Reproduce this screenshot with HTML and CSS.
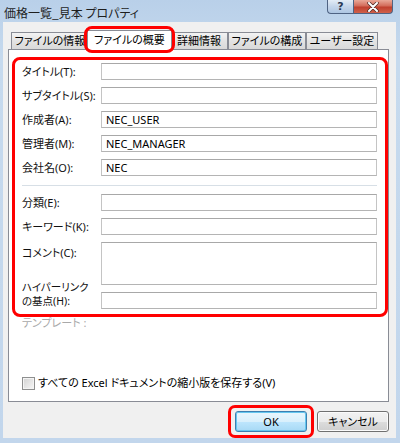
FILE: index.html
```html
<!DOCTYPE html>
<html lang="ja">

<head>
    <meta charset="UTF-8">
    <title>価格一覧_見本 プロパティ</title>
    <link rel="stylesheet" href="styles.css">
</head>

<body>
    <div class="window">
        <div class="titlebar">
            <span class="caption">価格一覧_見本 プロパティ</span>
            <div class="caption-btns">
                <span class="cap-btn cap-help">?</span>
                <span class="cap-btn cap-close">
                    <svg width="14" height="10" viewBox="0 0 14 10">
                        <path d="M3 1 L11 9 M11 1 L3 9" stroke="#4a2a26" stroke-width="3.4" stroke-linecap="round" />
                        <path d="M3 1 L11 9 M11 1 L3 9" stroke="#fff" stroke-width="2" stroke-linecap="round" />
                    </svg>
                </span>
            </div>
        </div>

        <div class="dialog">
            <ul class="tabs">
                <li class="tab tab-1">ファイルの情報</li>
                <li class="tab tab-2 active">ファイルの概要</li>
                <li class="tab tab-3">詳細情報</li>
                <li class="tab tab-4">ファイルの構成</li>
                <li class="tab tab-5">ユーザー設定</li>
            </ul>

            <div class="panel">
                <div class="form mark">
                    <div class="row">
                        <label class="lbl">タイトル(T):</label>
                        <div class="field"></div>
                    </div>
                    <div class="row">
                        <label class="lbl">サブタイトル(S):</label>
                        <div class="field"></div>
                    </div>
                    <div class="row">
                        <label class="lbl">作成者(A):</label>
                        <div class="field">NEC_USER</div>
                    </div>
                    <div class="row">
                        <label class="lbl">管理者(M):</label>
                        <div class="field">NEC_MANAGER</div>
                    </div>
                    <div class="row">
                        <label class="lbl">会社名(O):</label>
                        <div class="field">NEC</div>
                    </div>

                    <div class="sep"></div>

                    <div class="row">
                        <label class="lbl">分類(E):</label>
                        <div class="field"></div>
                    </div>
                    <div class="row">
                        <label class="lbl">キーワード(K):</label>
                        <div class="field"></div>
                    </div>
                    <div class="row row-top">
                        <label class="lbl">コメント(C):</label>
                        <div class="field field-big"></div>
                    </div>
                    <div class="row">
                        <label class="lbl lbl-2">ハイパーリンク<br>の基点(H):</label>
                        <div class="field"></div>
                    </div>
                </div>

                <div class="template">テンプレート :</div>

                <div class="check">
                    <span class="box"></span>
                    <span>すべての Excel ドキュメントの縮小版を保存する(V)</span>
                </div>
            </div>

            <div class="buttons">
                <span class="mark-btn"><button class="btn btn-default">OK</button></span>
                <button class="btn">キャンセル</button>
            </div>
        </div>
    </div>
</body>

</html>
```

FILE: styles.css
```css
* {
    padding: 0;
    margin: 0;
    list-style: none;
    box-sizing: border-box;
}

body {
    background: #c4d8ed;
    font-family: "Noto Sans", "Noto Sans CJK JP", sans-serif;
    font-size: 11px;
    line-height: 14px;
    color: #000;
    font-feature-settings: "palt";
}

/*窓枠*/
.window {
    width: 400px;
    height: 443px;
    display: flex;
    flex-direction: column;
    padding: 0 4px 0 3px;
    background: linear-gradient(#b9d0e9, #c6daee 60px, #c2d6ec);
}

.titlebar {
    height: 22px;
    display: flex;
    align-items: flex-start;
}

.caption {
    font-family: "Noto Sans CJK JP", sans-serif;
    font-size: 12px;
    line-height: 14px;
    padding: 6px 0 0 1px;
    color: #1e1e1e;
}

.caption-btns {
    margin-left: auto;
    margin-right: 3px;
    display: flex;
}

.cap-btn {
    height: 14px;
    display: flex;
    align-items: center;
    justify-content: center;
    border: 1px solid #4f6383;
    border-top: none;
}

.cap-help {
    width: 26px;
    border-radius: 0 0 0 4px;
    border-right: none;
    background: linear-gradient(#e3ecf6, #c4d5ea 50%, #aec6e2);
    font-family: "DejaVu Sans", sans-serif;
    font-weight: bold;
    font-size: 11px;
    color: #2a3a55;
}

.cap-close {
    width: 40px;
    border-radius: 0 0 4px 0;
    background: linear-gradient(#e9a898, #d36c5a 45%, #c0402e 55%, #d0604a);
}

/*ダイアログ本体*/
.dialog {
    height: 416px;
    background: #f0f0f0;
    padding: 8px 7px 0 5px;
    display: flex;
    flex-direction: column;
}

.tabs {
    height: 19px;
    display: flex;
    align-items: flex-end;
    padding-left: 3px;
}

.tab {
    height: 17px;
    border: 1px solid #898c95;
    border-bottom: none;
    background: linear-gradient(#f3f3f3, #e3e3e3 50%, #d9d9d9);
    text-align: center;
    line-height: 15px;
    white-space: nowrap;
    overflow: hidden;
}

.tab-1 { width: 78px; }
.tab-2 { width: 85px; }
.tab-3 { width: 58px; }
.tab-4 { width: 78px; }
.tab-5 { width: 72px; }

.tab.active {
    height: 20px;
    margin: 0 -2px -1px;
    background: #fff;
    position: relative;
    z-index: 1;
    overflow: visible;
    line-height: 17px;
}

/*赤枠の注記*/
.tab.active::after {
    content: '';
    position: absolute;
    left: -4px;
    right: -4px;
    top: -5px;
    bottom: -3px;
    border: 3px solid #f00;
    border-radius: 8px;
}

.panel {
    height: 355px;
    border: 1px solid #898c95;
    background: #fff;
    display: flex;
    flex-direction: column;
}

.mark {
    border: 3px solid #f00;
    border-radius: 8px;
}

.form {
    margin: 7px 0 0 3px;
    padding: 3px 8px 5px 7px;
    display: flex;
    flex-direction: column;
    gap: 7px;
}

.row {
    display: flex;
    align-items: center;
}

.row-top {
    align-items: flex-start;
}

.row-top .lbl {
    padding-top: 4px;
}

.lbl {
    width: 79px;
    flex: none;
    color: #111;
    white-space: nowrap;
}

.lbl-2 {
    font-size: 10.5px;
    line-height: 14px;
    margin-top: -13px;
}

.field {
    flex: 1;
    height: 17px;
    border: 1px solid #c4c4c4;
    border-top-color: #a8a8a8;
    border-bottom-color: #b4b4b4;
    padding: 0 4px;
    line-height: 15px;
    color: #000;
}

.field-big {
    height: 43px;
}

.sep {
    height: 1px;
    background: #d7dfe6;
    margin: 2px 0 1px;
}

.template {
    margin: 0 0 0 13px;
    color: #a9a9a9;
    line-height: 11px;
}

.check {
    margin: auto 0 11px 13px;
    display: flex;
    align-items: center;
    gap: 3px;
}

.box {
    width: 13px;
    height: 13px;
    border: 1px solid #8e8f8f;
    background: linear-gradient(135deg, #d2d2d2, #f7f7f7);
    box-shadow: inset 0 0 0 1px #f4f4f4;
}

/*ボタン*/
.buttons {
    margin-top: 3px;
    display: flex;
    justify-content: flex-end;
    align-items: center;
    gap: 3px;
    padding-right: 0;
}

.mark-btn {
    display: flex;
    border: 3px solid #f00;
    border-radius: 7px;
    padding: 3px 4px;
}

.btn {
    width: 72px;
    height: 21px;
    font: inherit;
    font-feature-settings: "palt";
    border: 1px solid #707070;
    border-radius: 3px;
    background: linear-gradient(#f2f2f2, #ebebeb 50%, #dddddd 51%, #cfcfcf);
    box-shadow: inset 0 0 0 1px #fbfbfb;
    color: #000;
}

.btn-default {
    border-color: #3c7fb1;
    background: linear-gradient(#eaf6fd, #d9f0fc 50%, #bee6fd 51%, #a7d9f5);
    box-shadow: inset 0 0 0 1px #66c7ef;
}
```
